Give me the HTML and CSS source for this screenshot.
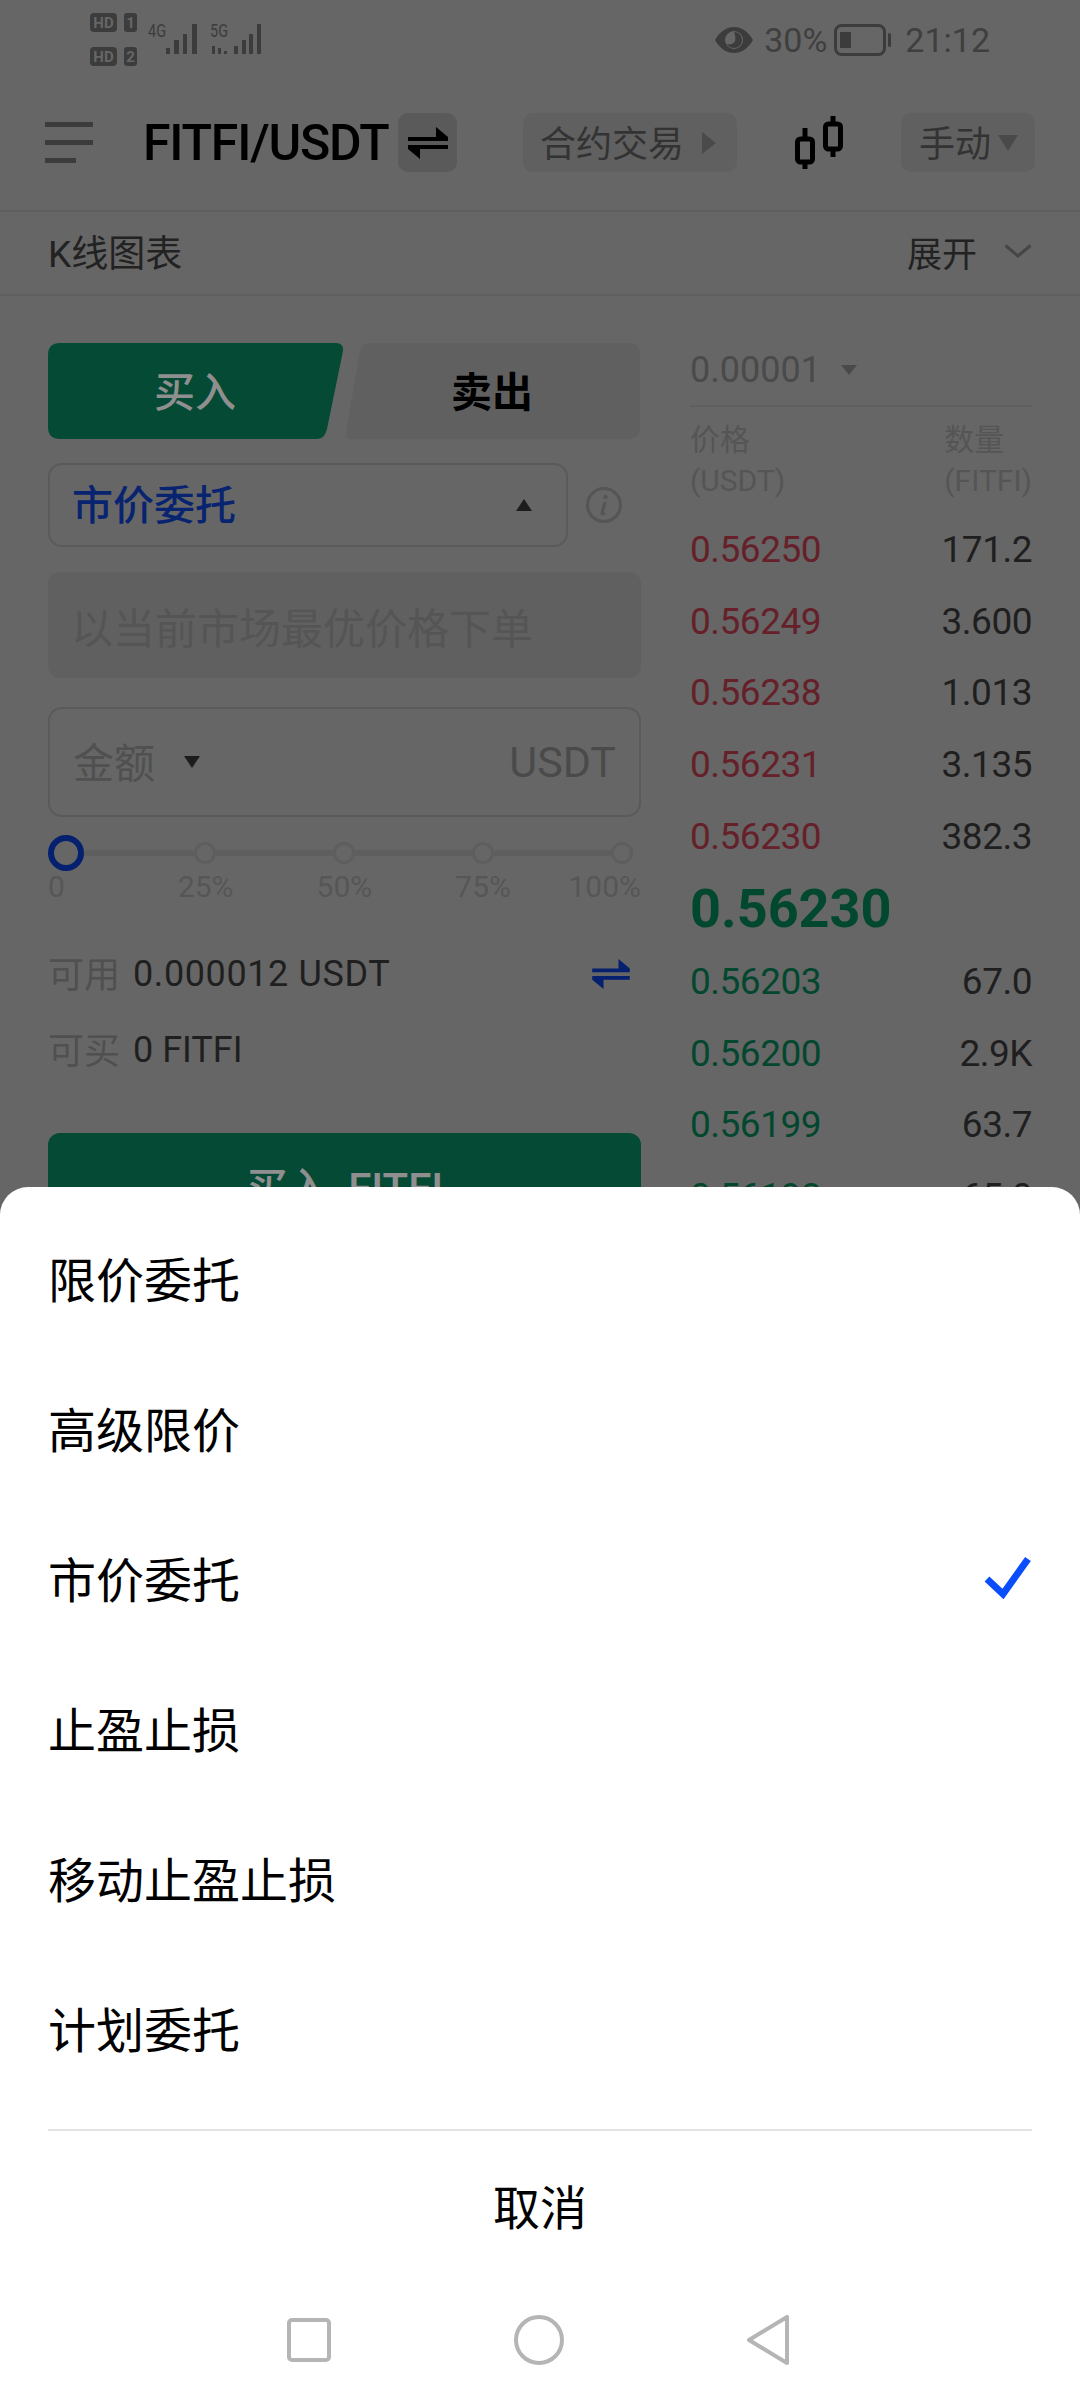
FILE: index.html
```html
<!DOCTYPE html>
<html lang="zh-CN">

<head>
    <meta charset="UTF-8">
    <meta name="viewport" content="width=device-width, initial-scale=1.0">
    <title>FITFI/USDT</title>
    <link rel="stylesheet" href="styles.css">
</head>

<body>
    <div class="page">

        <!-- STATUS BAR -->
        <div class="status-bar">
            <svg class="status-signal" width="180" height="60" viewBox="0 0 180 60">
                <rect x="0" y="3" width="27" height="19" rx="4" fill="#3c3c3c" />
                <rect x="34" y="3" width="13" height="19" rx="3" fill="#3c3c3c" />
                <rect x="0" y="37" width="27" height="19" rx="4" fill="#3c3c3c" />
                <rect x="34" y="37" width="13" height="19" rx="3" fill="#3c3c3c" />
                <text x="13.5" y="18" class="sig-hd" text-anchor="middle">HD</text>
                <text x="40.5" y="18" class="sig-hd" text-anchor="middle">1</text>
                <text x="13.5" y="52" class="sig-hd" text-anchor="middle">HD</text>
                <text x="40.5" y="52" class="sig-hd" text-anchor="middle">2</text>
                <text x="58" y="27" class="sig-net" textLength="18" lengthAdjust="spacingAndGlyphs">4G</text>
                <text x="120" y="27" class="sig-net" textLength="18" lengthAdjust="spacingAndGlyphs">5G</text>
                <path d="M76 38h4v6h-4zM84 30h5v14h-5zM93 24h4v20h-4zM102 14h5v30h-5z" fill="#3c3c3c" />
                <path d="M144 36h4v8h-4zM152 30h4v14h-4zM159 24h4v20h-4zM167 14h4v30h-4z" fill="#3c3c3c" />
                <path d="M122 36h3v8h-3zM128 38h3v6h-3zM134 41h3v3h-3z" fill="#3c3c3c" />
            </svg>
            <div class="status-right">
                <svg width="40" height="26" viewBox="0 0 40 26">
                    <path d="M1 13C6 4 13 0 20 0s14 4 19 13c-5 9-12 13-19 13S6 22 1 13z" fill="#3c3c3c" />
                    <circle cx="20" cy="13" r="9" fill="#666" />
                    <path d="M20 5a8 8 0 1 1-7 12c3 1 7 0 8-3s0-6-1-9z" fill="#3c3c3c" />
                </svg>
                <span class="status-text status-pct">30%</span>
                <svg class="status-battery" width="58" height="32" viewBox="0 0 58 32">
                    <rect x="1.5" y="1.5" width="49" height="29" rx="6" fill="none" stroke="#3c3c3c" stroke-width="3" />
                    <rect x="6" y="8" width="11" height="16" rx="1" fill="#3c3c3c" />
                    <rect x="54" y="9" width="3" height="14" rx="1.5" fill="#3c3c3c" />
                </svg>
                <span class="status-text">21:12</span>
            </div>
        </div>

        <!-- HEADER -->
        <div class="header">
            <div class="menu-icon">
                <span></span>
                <span></span>
                <span class="short"></span>
            </div>
            <span class="pair-name">FITFI/USDT</span>
            <div class="pair-swap">
                <svg width="40" height="32" viewBox="0 0 40 32">
                    <path d="M0 10h28V0l12 10v4H0zM0 18h40v4H12v10L0 22z" fill="#000" />
                </svg>
            </div>
            <div class="chip chip-contract">
                <span>合约交易</span>
                <i class="tri-right"></i>
            </div>
            <svg class="candle-icon" width="54" height="54" viewBox="0 0 54 54">
                <path d="M12 12v41M40 0v41" stroke="#000" stroke-width="5" fill="none" />
                <rect x="4.5" y="23" width="15" height="23" rx="3" fill="#666" stroke="#000" stroke-width="5" />
                <rect x="32.5" y="8" width="15" height="25" rx="3" fill="#666" stroke="#000" stroke-width="5" />
            </svg>
            <div class="chip chip-mode">
                <span>手动</span>
                <i class="tri-down-grey"></i>
            </div>
        </div>

        <!-- K LINE -->
        <div class="kline-row">
            <span>K线图表</span>
            <div class="kline-open">
                <span>展开</span>
                <svg width="28" height="14" viewBox="0 0 28 14">
                    <path d="M1.5 1.5L14 12L26.5 1.5" fill="none" stroke="#464646" stroke-width="3" />
                </svg>
            </div>
        </div>

        <!-- MAIN -->
        <div class="main">
            <div class="trade-col">
                <div class="tabs">
                    <div class="tab tab-buy">
                        <svg class="tab-bg" width="295" height="96" viewBox="0 0 295 96">
                            <path d="M12 0H287Q296 0 295 8L279 86Q277 96 268 96H12Q0 96 0 84V12Q0 0 12 0Z" fill="#054a35" />
                        </svg>
                        <span>买入</span>
                    </div>
                    <div class="tab tab-sell">
                        <svg class="tab-bg" width="294" height="96" viewBox="0 0 294 96">
                            <path d="M24 0H282Q294 0 294 12V84Q294 96 282 96H6Q-1 96 0 90L14 8Q16 0 24 0Z" fill="#606060" />
                        </svg>
                        <span>卖出</span>
                    </div>
                </div>

                <div class="select-row">
                    <div class="order-select">
                        <span>市价委托</span>
                        <i class="tri-up"></i>
                    </div>
                    <svg class="info-icon" width="36" height="36" viewBox="0 0 36 36">
                        <circle cx="18" cy="18" r="16.5" fill="none" stroke="#555" stroke-width="3" />
                        <circle cx="19.5" cy="10" r="2.2" fill="#555" />
                        <path d="M19 15l-3 11q0 2 3 0" fill="none" stroke="#555" stroke-width="3" />
                    </svg>
                </div>

                <div class="market-hint">以当前市场最优价格下单</div>

                <div class="amount-box">
                    <span class="amount-label">金额</span>
                    <i class="tri-down"></i>
                    <span class="amount-unit">USDT</span>
                </div>

                <div class="slider">
                    <span class="slider-ring"></span>
                    <span class="slider-seg first"></span>
                    <span class="slider-node"></span>
                    <span class="slider-seg"></span>
                    <span class="slider-node"></span>
                    <span class="slider-seg"></span>
                    <span class="slider-node"></span>
                    <span class="slider-seg"></span>
                    <span class="slider-node"></span>
                </div>
                <div class="slider-labels">
                    <span>0</span>
                    <span>25%</span>
                    <span>50%</span>
                    <span>75%</span>
                    <span class="last">100%</span>
                </div>

                <div class="balance-row first">
                    <span class="balance-label">可用</span>
                    <span class="balance-num">0.000012 USDT</span>
                    <svg class="balance-swap" width="38" height="30" viewBox="0 0 40 32">
                        <path d="M0 10h28V0l12 10v4H0zM0 18h40v4H12v10L0 22z" fill="#04206f" />
                    </svg>
                </div>
                <div class="balance-row">
                    <span class="balance-label">可买</span>
                    <span>0 FITFI</span>
                </div>

                <div class="buy-btn">买入 FITFI</div>
            </div>

            <div class="book-col">
                <div class="book-step">
                    <span>0.00001</span>
                    <i class="tri-down-grey small"></i>
                </div>
                <div class="book-head">
                    <div>价格<br>(USDT)</div>
                    <div>数量<br>(FITFI)</div>
                </div>
                <div class="book-row ask"><span>0.56250</span><span class="qty">171.2</span></div>
                <div class="book-row ask"><span>0.56249</span><span class="qty">3.600</span></div>
                <div class="book-row ask"><span>0.56238</span><span class="qty">1.013</span></div>
                <div class="book-row ask"><span>0.56231</span><span class="qty">3.135</span></div>
                <div class="book-row ask"><span>0.56230</span><span class="qty">382.3</span></div>
                <div class="book-price">0.56230</div>
                <div class="book-row bid"><span>0.56203</span><span class="qty">67.0</span></div>
                <div class="book-row bid"><span>0.56200</span><span class="qty">2.9K</span></div>
                <div class="book-row bid"><span>0.56199</span><span class="qty">63.7</span></div>
                <div class="book-row bid"><span>0.56198</span><span class="qty">65.0</span></div>
            </div>
        </div>

        <!-- BOTTOM SHEET -->
        <div class="sheet">
            <div class="sheet-item">限价委托</div>
            <div class="sheet-item">高级限价</div>
            <div class="sheet-item">
                <span>市价委托</span>
                <svg width="48" height="44" viewBox="0 0 48 44">
                    <path d="M3 24L19 39L44 4" fill="none" stroke="#0a4dfa" stroke-width="7" />
                </svg>
            </div>
            <div class="sheet-item">止盈止损</div>
            <div class="sheet-item">移动止盈止损</div>
            <div class="sheet-item">计划委托</div>
            <div class="sheet-line"></div>
            <div class="sheet-cancel">取消</div>
            <div class="nav-bar">
                <svg width="44" height="44" viewBox="0 0 44 44">
                    <rect x="2" y="2" width="40" height="40" rx="3" fill="none" stroke="#b5b5b5" stroke-width="4" />
                </svg>
                <svg width="50" height="50" viewBox="0 0 50 50">
                    <circle cx="25" cy="25" r="23" fill="none" stroke="#b5b5b5" stroke-width="4" />
                </svg>
                <svg width="42" height="50" viewBox="0 0 42 50">
                    <path d="M40 2V48L2 25Z" fill="none" stroke="#b5b5b5" stroke-width="4" stroke-linejoin="round" />
                </svg>
            </div>
        </div>
    </div>
</body>

</html>
```

FILE: styles.css
```css
/* RESET */
* {
    margin: 0;
    padding: 0;
    box-sizing: border-box;
    font-family: Roboto, "Noto Sans CJK SC", sans-serif;
}

i {
    display: block;
    flex: none;
}

/* GERAL */
body {
    background-color: #666;
}

.page {
    position: relative;
    width: 1080px;
    height: 2400px;
    overflow: hidden;
    background-color: #666;
    color: #1f1f1f;
}

/* STATUS BAR */
.status-bar {
    display: flex;
    align-items: flex-start;
    justify-content: space-between;
    height: 95px;
    padding: 10px 90px 0 90px;
}

.sig-hd {
    font-size: 15px;
    font-weight: 700;
    fill: #666;
}

.sig-net {
    font-size: 19px;
    fill: #3c3c3c;
}

.status-right {
    display: flex;
    align-items: center;
    height: 32px;
    margin-top: 14px;
    color: #3f3f3f;
}

.status-text {
    font-size: 34px;
    line-height: 32px;
}

.status-pct {
    margin-left: 10px;
}

.status-battery {
    margin: 0 13px 0 7px;
}

/* HEADER */
.header {
    display: flex;
    align-items: center;
    height: 117px;
    padding-left: 45px;
    padding-bottom: 20px;
    border-bottom: 2px solid #5e5e5e;
}

.menu-icon {
    display: flex;
    flex-direction: column;
    gap: 13px;
    width: 48px;
}

.menu-icon span {
    display: block;
    height: 5px;
    background-color: #3c3c3c;
}

.menu-icon .short {
    width: 31px;
}

.pair-name {
    margin-left: 50px;
    width: 246px;
    font-size: 50px;
    font-weight: 500;
    letter-spacing: -1.2px;
    line-height: 60px;
    color: #000;
    white-space: nowrap;
}

.pair-swap {
    display: flex;
    align-items: center;
    justify-content: center;
    width: 59px;
    height: 59px;
    margin-left: 9px;
    border-radius: 10px;
    background-color: #5a5a5a;
}

.chip {
    display: flex;
    align-items: center;
    height: 59px;
    border-radius: 10px;
    background-color: #606060;
    font-size: 36px;
    color: #333;
}

.chip span {
    padding-bottom: 4px;
}

.chip-contract {
    width: 214px;
    margin-left: 66px;
    padding-left: 17px;
}

.chip-contract .tri-right {
    margin-left: 18px;
}

.candle-icon {
    margin-left: 56px;
}

.chip-mode {
    width: 134px;
    margin-left: 54px;
    padding-left: 18px;
}

.chip-mode .tri-down-grey {
    margin-left: 7px;
}

.tri-right {
    width: 0;
    height: 0;
    border-left: 14px solid #4a4a4a;
    border-top: 11px solid transparent;
    border-bottom: 11px solid transparent;
}

.tri-down-grey {
    width: 0;
    height: 0;
    border-top: 16px solid #4a4a4a;
    border-left: 10px solid transparent;
    border-right: 10px solid transparent;
}

.tri-down-grey.small {
    border-top-width: 10px;
    border-left-width: 8px;
    border-right-width: 8px;
}

.tri-up {
    width: 0;
    height: 0;
    border-bottom: 12px solid #1d1d1d;
    border-left: 8px solid transparent;
    border-right: 8px solid transparent;
}

.tri-down {
    width: 0;
    height: 0;
    border-top: 12px solid #1d1d1d;
    border-left: 8px solid transparent;
    border-right: 8px solid transparent;
}

/* K LINE */
.kline-row {
    display: flex;
    align-items: center;
    justify-content: space-between;
    height: 84px;
    padding: 0 48px 4px 48px;
    border-bottom: 2px solid #5e5e5e;
    font-size: 37px;
    color: #222;
}

.kline-open {
    display: flex;
    align-items: center;
    gap: 27px;
    font-size: 35px;
}

/* MAIN */
.main {
    display: flex;
    padding-left: 48px;
}

.trade-col {
    width: 593px;
    padding-top: 47px;
}

.tabs {
    display: flex;
    gap: 3px;
}

.tab {
    position: relative;
    display: flex;
    align-items: center;
    justify-content: center;
    height: 96px;
    padding-bottom: 5px;
    font-size: 41px;
    font-weight: 500;
}

.tab span {
    position: relative;
}

.tab-bg {
    position: absolute;
    top: 0;
    left: 0;
}

.tab-buy {
    width: 295px;
    padding-right: 1px;
    color: #8f8f8f;
}

.tab-sell {
    width: 294px;
    padding-right: 2px;
    color: #000;
    font-weight: 700;
}

.select-row {
    display: flex;
    align-items: center;
    margin-top: 24px;
}

.order-select {
    display: flex;
    align-items: center;
    justify-content: space-between;
    width: 520px;
    height: 84px;
    padding: 0 34px 0 22px;
    border: 2px solid #5a5a5a;
    border-radius: 14px;
    font-size: 41px;
    font-weight: 500;
    color: #082470;
}

.order-select span {
    padding-bottom: 6px;
}

.info-icon {
    margin-left: 18px;
}

.market-hint {
    display: flex;
    align-items: center;
    height: 106px;
    margin-top: 25px;
    padding-left: 23px;
    border-radius: 12px;
    background-color: #606060;
    font-size: 42px;
    color: #555;
}

.amount-box {
    display: flex;
    align-items: center;
    height: 110px;
    margin-top: 29px;
    padding: 0 23px;
    border: 2px solid #5a5a5a;
    border-radius: 14px;
}

.amount-label {
    padding-bottom: 5px;
    font-size: 41px;
    color: #505050;
}

.amount-box .tri-down {
    margin-left: 29px;
}

.amount-unit {
    margin-left: auto;
    font-size: 43px;
    color: #4a4a4a;
}

/* SLIDER */
.slider {
    display: flex;
    align-items: center;
    height: 36px;
    margin-top: 18px;
}

.slider-ring {
    flex: none;
    width: 36px;
    height: 36px;
    border: 6px solid #04206f;
    border-radius: 50%;
}

.slider-seg {
    flex: none;
    width: 117px;
    height: 6px;
    background-color: #5e5e5e;
}

.slider-seg.first {
    width: 110px;
}

.slider-node {
    flex: none;
    width: 22px;
    height: 22px;
    border: 3px solid #5e5e5e;
    border-radius: 50%;
}

.slider-labels {
    display: flex;
    height: 31px;
    margin-top: 1px;
    font-size: 30px;
    line-height: 30px;
    color: #565656;
}

.slider-labels span:nth-child(2) {
    margin-left: 113px;
}

.slider-labels span:nth-child(3),
.slider-labels span:nth-child(4) {
    margin-left: 83px;
}

.slider-labels .last {
    margin-left: auto;
}

/* BALANCE */
.balance-row {
    display: flex;
    align-items: center;
    height: 40px;
    margin-top: 36px;
    font-size: 36px;
    color: #1f1f1f;
}

.balance-row.first {
    margin-top: 51px;
}

.balance-label {
    margin-right: 13px;
    padding-bottom: 4px;
    color: #505050;
}

.balance-num {
    letter-spacing: 0.6px;
}

.balance-swap {
    margin-left: auto;
    margin-right: 11px;
}

.buy-btn {
    display: flex;
    align-items: center;
    justify-content: center;
    height: 110px;
    margin-top: 63px;
    padding-bottom: 8px;
    border-radius: 12px;
    background-color: #054a35;
    font-size: 42px;
    font-weight: 500;
    word-spacing: 8px;
    color: #8f8f8f;
}

/* ORDER BOOK */
.book-col {
    width: 342px;
    margin-left: 49px;
    padding-top: 45px;
}

.book-step {
    display: flex;
    align-items: center;
    gap: 20px;
    height: 66px;
    padding-bottom: 6px;
    border-bottom: 2px solid #5f5f5f;
    font-size: 36px;
    color: #4a4a4a;
}

.book-head {
    display: flex;
    justify-content: space-between;
    margin: 12px 0 13px 0;
    font-size: 30px;
    line-height: 41px;
    color: #555;
}

.book-row {
    display: flex;
    align-items: center;
    justify-content: space-between;
    height: 71.6px;
    font-size: 37px;
    letter-spacing: -0.5px;
}

.book-row .qty {
    color: #1f1f1f;
}

.ask {
    color: #652029;
}

.bid {
    color: #04472f;
}

.book-price {
    display: flex;
    align-items: center;
    height: 74px;
    font-size: 54px;
    font-weight: 700;
    color: #02482f;
}

/* BOTTOM SHEET */
.sheet {
    position: absolute;
    top: 1187px;
    left: 0;
    right: 0;
    bottom: 0;
    padding-top: 17px;
    border-radius: 28px 28px 0 0;
    background-color: #FFF;
    color: #000;
}

.sheet-item {
    display: flex;
    align-items: center;
    justify-content: space-between;
    height: 150px;
    padding: 0 48px 5px 48px;
    font-size: 48px;
}

.sheet-line {
    height: 2px;
    margin: 25px 48px 0 48px;
    background-color: #e2e2e2;
}

.sheet-cancel {
    display: flex;
    align-items: center;
    justify-content: center;
    height: 152px;
    padding-bottom: 6px;
    font-size: 47px;
}

.nav-bar {
    display: flex;
    align-items: center;
    gap: 183px;
    height: 114px;
    padding-left: 287px;
}
```
